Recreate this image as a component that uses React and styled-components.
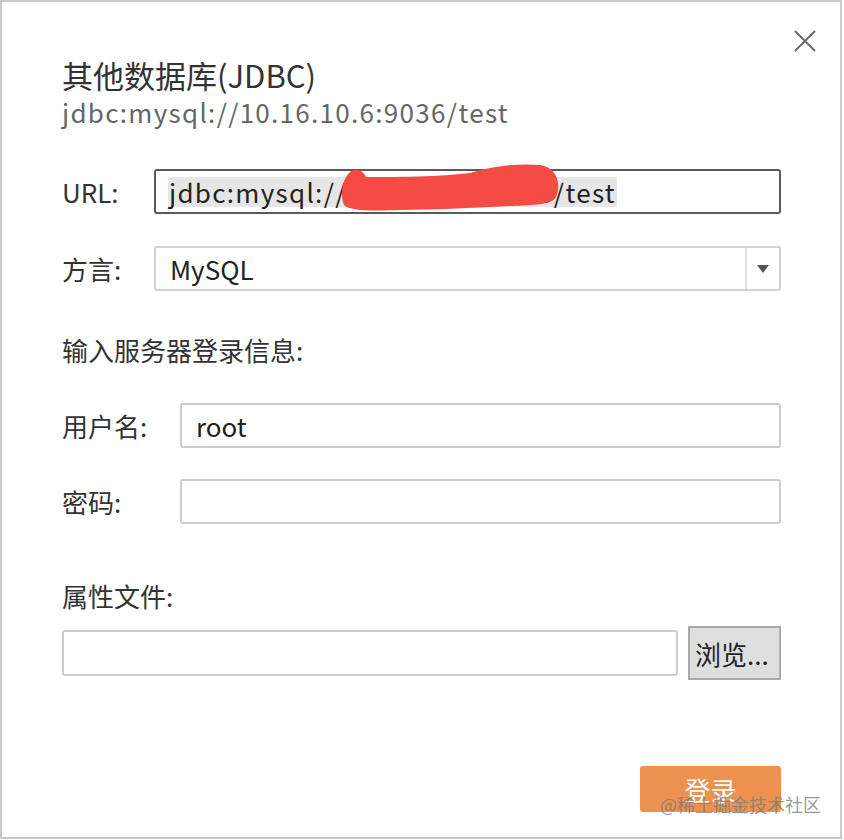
import React from "react";
import styled, { createGlobalStyle } from "styled-components";

const Global = createGlobalStyle`
  html, body { margin: 0; padding: 0; background: #ffffff; }
  body { font-family: "Noto Sans CJK SC", "Noto Sans", sans-serif; }
  * { box-sizing: border-box; }
`;

const Dialog = styled.div`
  position: relative;
  width: 842px;
  height: 839px;
  border: 2px solid #c9c9c9;
  background: #fff;
  padding: 53px 59px 0 60px;
  display: flex;
  flex-direction: column;
  color: #333;
`;

const Close = styled.button`
  position: absolute;
  top: 26px;
  right: 22px;
  width: 26px;
  height: 26px;
  padding: 0;
  border: 0;
  background: none;
  display: flex;
  align-items: center;
  justify-content: center;
`;

const Title = styled.h1`
  margin: 0;
  font-size: 31px;
  font-weight: 400;
  line-height: 40px;
  color: #333;
`;

const Subtitle = styled.div`
  font-size: 26px;
  letter-spacing: 1.3px;
  line-height: 34px;
  color: #666;
`;

const Row = styled.div`
  display: grid;
  grid-template-columns: ${(p) => p.$label}px 1fr;
  align-items: center;
  margin-top: ${(p) => p.$mt}px;
`;

const Label = styled.div`
  font-size: 26px;
  line-height: 32px;
  color: #333;
`;

const Field = styled.div`
  height: 45px;
  border: ${(p) => (p.$focus ? "2px solid #5a5a5a" : "2px solid #cdcdcd")};
  border-radius: 3px;
  background: #fff;
  display: flex;
  align-items: center;
  padding-left: ${(p) => (p.$focus ? 12 : 14)}px;
  font-size: 26px;
  color: #222;
  position: relative;
`;

const Selected = styled.span`
  background: #e6e6e6;
  line-height: 30px;
  padding: 0 1px;
  letter-spacing: 1.3px;
  white-space: nowrap;
`;

const Scribble = styled.svg`
  position: absolute;
  left: 184px;
  top: -8px;
`;

const Select = styled.div`
  height: 45px;
  border: 2px solid #d2d2d2;
  border-radius: 3px;
  display: flex;
  align-items: stretch;
  font-size: 26px;
  color: #222;
`;

const SelectValue = styled.div`
  flex: 1;
  display: flex;
  align-items: center;
  padding-left: 14px;
`;

const Arrow = styled.div`
  width: 34px;
  border-left: 2px solid #e0e0e0;
  display: flex;
  align-items: center;
  justify-content: center;
`;

const Section = styled(Label)`
  margin-top: ${(p) => p.$mt}px;
`;

const FileRow = styled.div`
  display: flex;
  align-items: center;
  gap: 10px;
  margin-top: 14px;
`;

const FileInput = styled.div`
  flex: 1;
  height: 46px;
  border: 2px solid #cdcdcd;
  border-radius: 3px;
`;

const Browse = styled.button`
  width: 93px;
  height: 54px;
  background: #dedede;
  border: 2px solid #a9a9a9;
  font-family: inherit;
  font-size: 26px;
  color: #222;
  padding: 0 0 0 5px;
  text-align: left;
  white-space: nowrap;
`;

const Footer = styled.div`
  margin-top: auto;
  margin-bottom: 25px;
  display: flex;
  justify-content: flex-end;
  position: relative;
`;

const Primary = styled.button`
  width: 141px;
  height: 46px;
  background: #ec914f;
  color: #fff;
  border: 0;
  border-radius: 3px;
  font-family: inherit;
  font-size: 26px;
`;

const Watermark = styled.div`
  position: absolute;
  right: -40px;
  bottom: -5px;
  font-size: 18px;
  color: rgba(120, 120, 120, 0.75);
  white-space: nowrap;
`;

export default function App() {
  return (
    <>
      <Global />
      <Dialog>
        <Close aria-label="close">
          <svg width="24" height="24" viewBox="0 0 24 24">
            <path d="M2 2 L22 22 M22 2 L2 22" stroke="#666" strokeWidth="1.8" fill="none" />
          </svg>
        </Close>
        <Title>其他数据库(JDBC)</Title>
        <Subtitle>jdbc:mysql://10.16.10.6:9036/test</Subtitle>

        <Row $label={92} $mt={40}>
          <Label>URL:</Label>
          <Field $focus>
            <Selected>jdbc:mysql://10.16.10.6:9036/test</Selected>
            <Scribble width="220" height="50" viewBox="0 0 220 50">
              <path
                d="M4 42 C0 32 2 16 10 9 C16 4 24 8 26 14 C60 14 100 14 130 10 C150 3 180 0 200 2 C216 4 222 20 216 34 C212 42 192 42 172 43 C132 45 92 47 60 47 C30 48 10 48 4 42 Z"
                fill="#f44b45"
              />
            </Scribble>
          </Field>
        </Row>

        <Row $label={92} $mt={32}>
          <Label>方言:</Label>
          <Select>
            <SelectValue>MySQL</SelectValue>
            <Arrow>
              <svg width="14" height="10" viewBox="0 0 14 10">
                <path d="M1 1 L13 1 L7 9 Z" fill="#555" />
              </svg>
            </Arrow>
          </Select>
        </Row>

        <Section $mt={43}>输入服务器登录信息:</Section>

        <Row $label={118} $mt={37}>
          <Label>用户名:</Label>
          <Field>root</Field>
        </Row>

        <Row $label={118} $mt={31}>
          <Label>密码:</Label>
          <Field />
        </Row>

        <Section $mt={56}>属性文件:</Section>

        <FileRow>
          <FileInput />
          <Browse>浏览...</Browse>
        </FileRow>

        <Footer>
          <Primary>登录</Primary>
          <Watermark>@稀土掘金技术社区</Watermark>
        </Footer>
      </Dialog>
    </>
  );
}
